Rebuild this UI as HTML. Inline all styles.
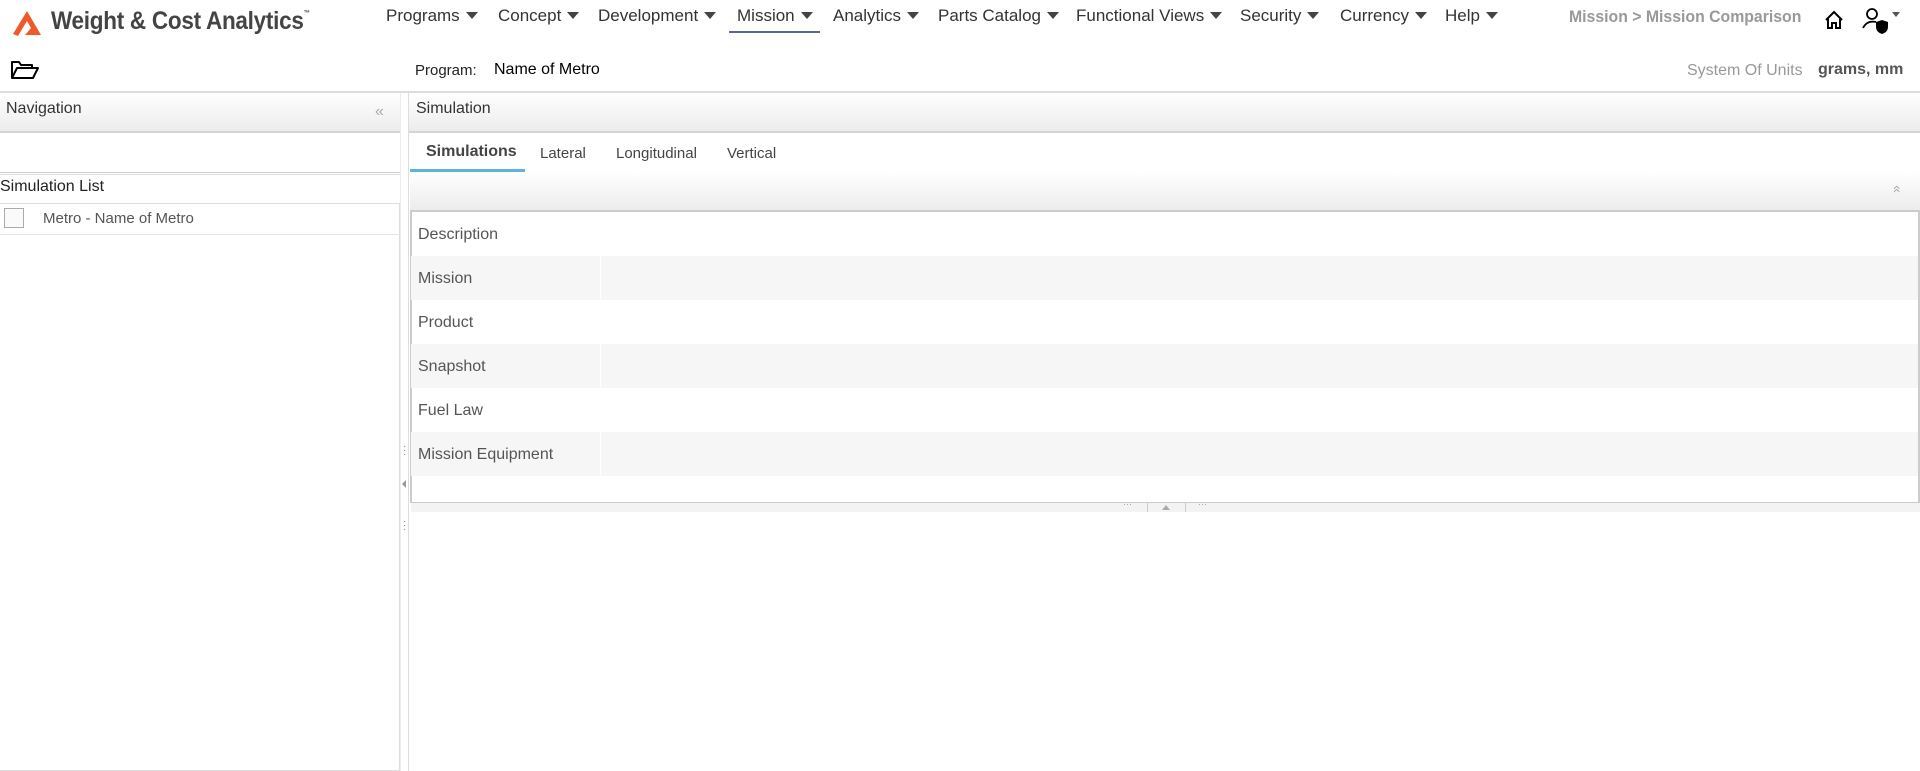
<!DOCTYPE html>
<html><head><meta charset="utf-8"><style>
*{margin:0;padding:0;box-sizing:border-box}
body{width:1920px;height:771px;overflow:hidden;background:#fff;font-family:"Liberation Sans",sans-serif;color:#333;position:relative}
.a{position:absolute;white-space:nowrap}
.menu{top:6px;font-size:17px;color:#333}
.menu .c{display:inline-block;width:0;height:0;border-left:6px solid transparent;border-right:6px solid transparent;border-top:7px solid #444;margin-left:6px;vertical-align:2px}
.grad{background:linear-gradient(#fff,#ececec)}
.row{position:absolute;left:411px;width:1507px;height:44px;font-size:16px;color:#555;padding:14px 0 0 7px}
.row.g{background:#f6f6f6}
.row.g:after{content:"";position:absolute;left:189px;top:0;width:1px;height:44px;background:#fff}
</style></head><body>
<!-- logo -->
<svg class="a" style="left:12px;top:10px" width="30" height="27" viewBox="0 0 30 27"><path d="M15 1 L29 25 L13 25 L19 18 L15 11 L6 26 L1 24 Z" fill="#f05a28"/></svg>
<div class="a" style="left:51px;top:7px;font-size:25px;font-weight:bold;color:#444;letter-spacing:-0.3px;transform:scaleX(0.9);transform-origin:left">Weight &amp; Cost Analytics<sup style="font-size:7px;vertical-align:14px">™</sup></div>
<div class="a menu" style="left:386px">Programs<span class="c"></span></div>
<div class="a menu" style="left:498px">Concept<span class="c"></span></div>
<div class="a menu" style="left:598px">Development<span class="c"></span></div>
<div class="a menu" style="left:737px">Mission<span class="c"></span></div>
<div class="a" style="left:729px;top:31px;width:91px;height:2px;background:#5a6a8a"></div>
<div class="a menu" style="left:833px">Analytics<span class="c"></span></div>
<div class="a menu" style="left:938px">Parts Catalog<span class="c"></span></div>
<div class="a menu" style="left:1076px">Functional Views<span class="c"></span></div>
<div class="a menu" style="left:1240px">Security<span class="c"></span></div>
<div class="a menu" style="left:1340px">Currency<span class="c"></span></div>
<div class="a menu" style="left:1445px">Help<span class="c"></span></div>
<div class="a" style="left:1569px;top:7px;font-size:17px;font-weight:bold;color:#999;transform:scaleX(0.93);transform-origin:left">Mission &gt; Mission Comparison</div>
<svg class="a" style="left:1824px;top:10px" width="20" height="20" viewBox="0 0 20 20"><path d="M2 10 L10 2 L18 10 M4 8 V18 H8 V13 H12 V18 H16 V8" fill="none" stroke="#000" stroke-width="2"/></svg>
<svg class="a" style="left:1862px;top:7px" width="40" height="28" viewBox="0 0 40 28"><circle cx="10" cy="7" r="5" fill="none" stroke="#000" stroke-width="1.8"/><path d="M1 21 Q5 13 14 15" fill="none" stroke="#000" stroke-width="1.8"/><path d="M14 15 L20 13 L26 15 V20 Q26 25 20 27 Q14 25 14 20 Z" fill="#000"/><path d="M30 5 L38 5 L34 10 Z" fill="#555"/></svg>
<!-- row 2 -->
<svg class="a" style="left:10px;top:60px" width="30" height="20" viewBox="0 0 30 20"><path d="M2 18 V2 H9 L11 5 H22 V8 M2 18 L7 8 H28 L23 18 Z" fill="none" stroke="#000" stroke-width="2" stroke-linejoin="round"/></svg>
<div class="a" style="left:415px;top:62px;font-size:15px;color:#222">Program:</div>
<div class="a" style="left:494px;top:61px;font-size:16px;color:#000">Name of Metro</div>
<div class="a" style="left:1687px;top:62px;font-size:16px;color:#999">System Of Units</div>
<div class="a" style="left:1818px;top:61px;font-size:16px;font-weight:bold;color:#555">grams, mm</div>
<div class="a" style="left:0;top:91px;width:1920px;height:2px;background:#ddd"></div>
<!-- left panel -->
<div class="a grad" style="left:0;top:93px;width:400px;height:40px;border-bottom:2px solid #d4d4d4"></div>
<div class="a" style="left:6px;top:100px;font-size:16px;color:#333">Navigation</div>
<div class="a" style="left:375px;top:103px;font-size:16px;color:#aaa">«</div>
<div class="a" style="left:0;top:172px;width:400px;height:3px;border-top:1px solid #ccc;border-bottom:1px solid #ddd"></div>
<div class="a" style="left:0;top:178px;font-size:16px;color:#222">Simulation List</div>
<div class="a" style="left:0;top:203px;width:400px;height:568px;border:1px solid #ddd;border-left:none"></div>
<div class="a" style="left:0;top:234px;width:400px;height:1px;background:#e4e4e4"></div>
<div class="a" style="left:4px;top:208px;width:20px;height:20px;border:1px solid #aaa;background:#fafafa"></div>
<div class="a" style="left:43px;top:210px;font-size:15px;color:#555">Metro - Name of Metro</div>
<!-- splitter -->
<div class="a" style="left:400px;top:93px;width:9px;height:678px;background:#fff;border-left:1px solid #eee;border-right:1px solid #ddd"></div>
<div class="a" style="left:403px;top:445px;font-size:10px;color:#888;line-height:4px">·<br>·<br>·</div>
<div class="a" style="left:402px;top:480px;width:0;height:0;border-top:4px solid transparent;border-bottom:4px solid transparent;border-right:4px solid #999"></div>
<div class="a" style="left:403px;top:520px;font-size:10px;color:#888;line-height:4px">·<br>·<br>·</div>
<!-- right panel -->
<div class="a grad" style="left:409px;top:93px;width:1511px;height:40px;border-bottom:2px solid #d4d4d4"></div>
<div class="a" style="left:416px;top:100px;font-size:16px;color:#333">Simulation</div>
<div class="a" style="left:426px;top:143px;font-size:16px;font-weight:bold;color:#444">Simulations</div>
<div class="a" style="left:410px;top:169px;width:115px;height:3px;background:#5ab4e0"></div>
<div class="a" style="left:540px;top:145px;font-size:15px;color:#444">Lateral</div>
<div class="a" style="left:616px;top:145px;font-size:15px;color:#444">Longitudinal</div>
<div class="a" style="left:727px;top:145px;font-size:15px;color:#444">Vertical</div>
<div class="a grad" style="left:410px;top:172px;width:1510px;height:38px"></div>
<div class="a" style="left:1894px;top:181px;font-size:14px;color:#aaa;transform:rotate(90deg)">«</div>
<div class="a" style="left:410px;top:210px;width:1510px;height:293px;border:2px solid #ccc;border-bottom:1px solid #ccc"></div>
<div class="row" style="top:212px">Description</div>
<div class="row g" style="top:256px">Mission</div>
<div class="row" style="top:300px">Product</div>
<div class="row g" style="top:344px">Snapshot</div>
<div class="row" style="top:388px">Fuel Law</div>
<div class="row g" style="top:432px">Mission Equipment</div>
<div class="a" style="left:411px;top:502px;width:1509px;height:10px;background:#f3f3f3;border-top:1px solid #ccc"></div>
<div class="a" style="left:1123px;top:499px;font-size:9px;color:#999">···</div>
<div class="a" style="left:1147px;top:503px;width:1px;height:9px;background:#ccc"></div>
<div class="a" style="left:1162px;top:505px;width:0;height:0;border-left:4px solid transparent;border-right:4px solid transparent;border-bottom:5px solid #aaa"></div>
<div class="a" style="left:1185px;top:503px;width:1px;height:9px;background:#ccc"></div>
<div class="a" style="left:1198px;top:499px;font-size:9px;color:#999">···</div>
</body></html>
